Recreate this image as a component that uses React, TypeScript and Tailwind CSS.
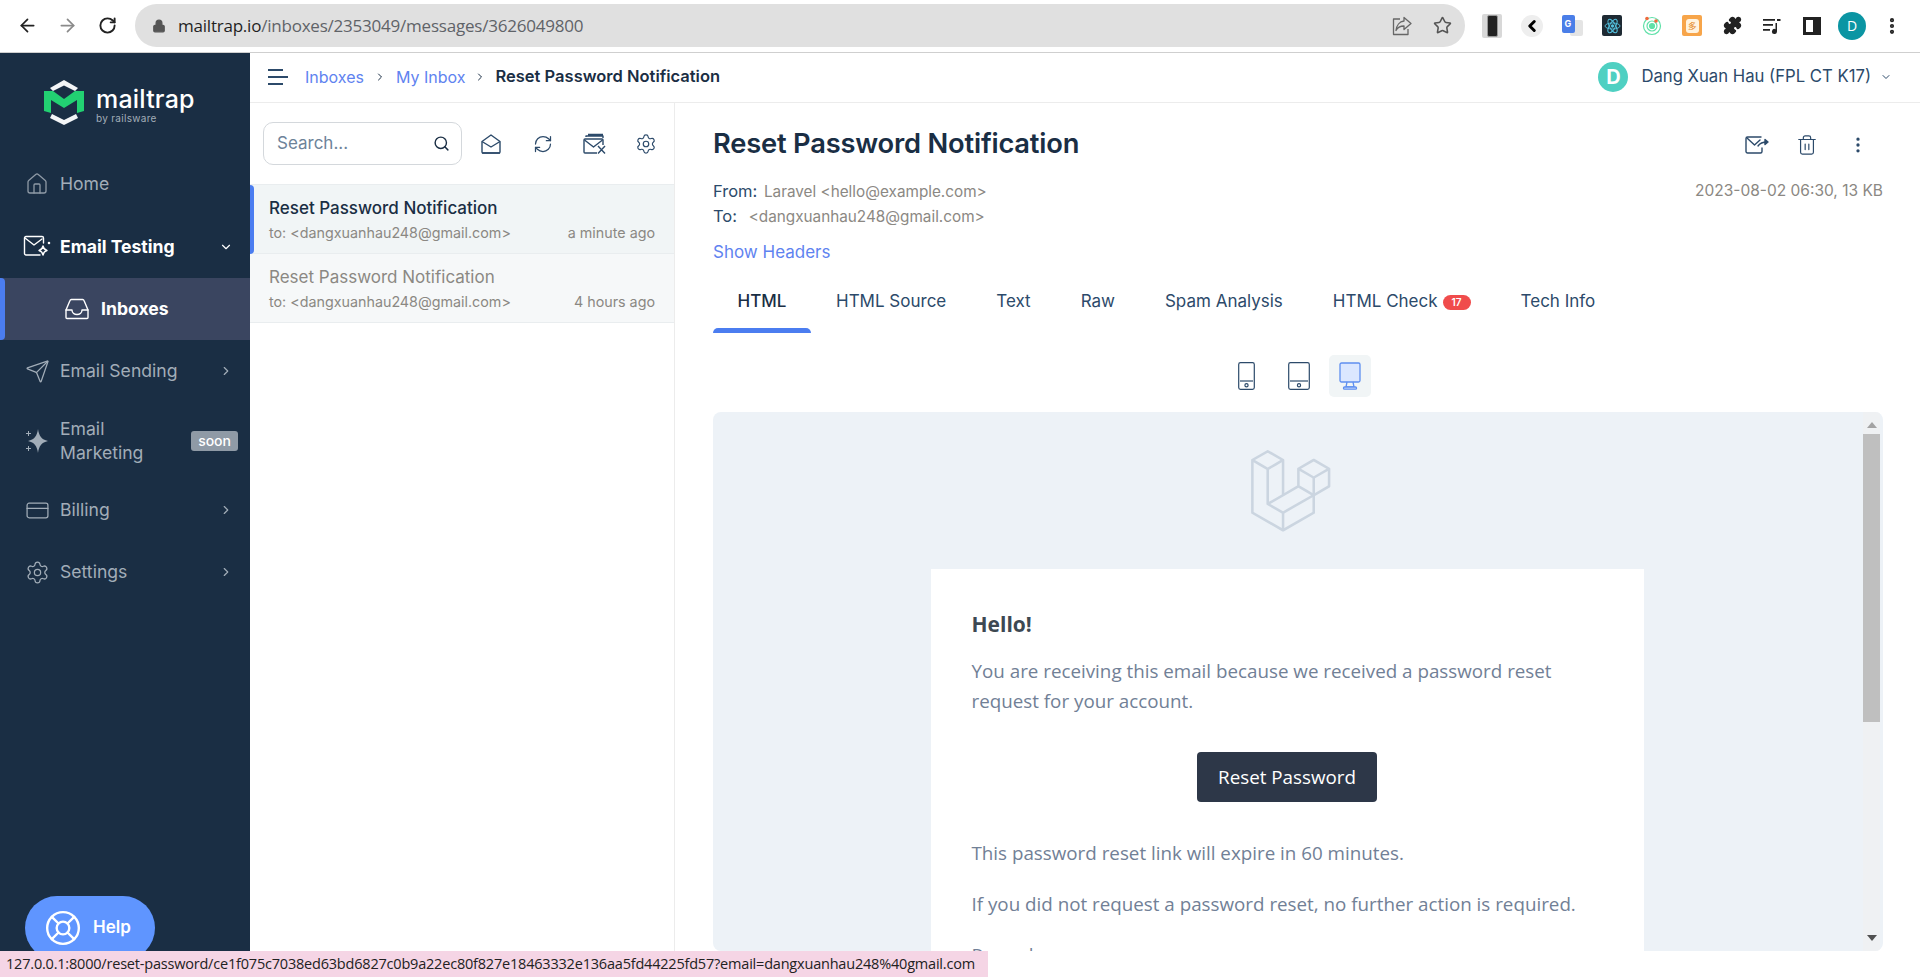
import { ChevronDown, ChevronRight, Search, RefreshCw, Settings, EllipsisVertical, Trash2, ArrowLeft, ArrowRight, RotateCw, Lock, Star, Puzzle, LifeBuoy, House, Send, CreditCard, ChevronLeft } from "lucide-react";

const ui = "font-['Inter',sans-serif]";
const chrome = "font-['Open_Sans','Noto_Sans',sans-serif]";

function Logo() {
  return (
    <svg width="40" height="46" viewBox="0 0 40 46" fill="none">
      <path d="M6 8 20 0 34 8 31 11 20 5.500 9 11Z" fill="#f3f5f7" />
      <path d="M8 34 20 40 32 34 34 38 20 45 6 38Z" fill="#f3f5f7" />
      <path d="M0 11H9L20 19 31 11H40V31L33 33V20L20 28 7 20V33L0 31Z" fill="#22d172" />
    </svg>
  );
}

function LaravelLogo() {
  return (
    <svg width="80" height="83" viewBox="0 0 50 52" fill="#cbd5e0">
      <path d="M49.626 11.564a.809.809 0 0 1 .028.209v10.972a.8.8 0 0 1-.402.694l-9.209 5.302V39.25c0 .286-.152.55-.4.694L20.42 51.01c-.044.025-.092.041-.14.058-.018.006-.035.017-.054.022a.805.805 0 0 1-.41 0c-.022-.006-.042-.018-.063-.026-.044-.016-.09-.03-.132-.054L.402 39.944A.801.801 0 0 1 0 39.25V6.334c0-.072.01-.142.028-.21.006-.023.02-.044.028-.067.015-.042.029-.085.051-.124.015-.026.037-.047.055-.071.023-.032.044-.065.071-.093.023-.023.053-.04.079-.06.029-.024.055-.05.088-.069h.001l9.61-5.533a.802.802 0 0 1 .8 0l9.61 5.533h.002c.032.02.059.045.088.068.026.02.055.038.078.06.028.029.048.062.072.094.017.024.04.045.054.071.023.04.036.082.052.124.008.023.022.044.028.068a.809.809 0 0 1 .028.209v20.559l8.008-4.611v-10.51c0-.07.01-.141.028-.208.007-.024.02-.045.028-.068.016-.042.03-.085.052-.124.015-.026.037-.047.054-.071.024-.032.044-.065.072-.093.023-.023.052-.04.078-.06.03-.024.056-.05.088-.069h.001l9.611-5.533a.801.801 0 0 1 .8 0l9.61 5.533c.034.02.06.045.09.068.025.02.054.038.077.06.028.029.048.062.072.094.018.024.04.045.054.071.023.039.036.082.052.124.009.023.022.044.028.068zm-1.574 10.718v-9.124l-3.363 1.936-4.646 2.675v9.124l8.01-4.611zm-9.61 16.505v-9.13l-4.57 2.61-13.05 7.448v9.216l17.62-10.144zM1.602 7.719v31.068L19.22 48.93v-9.214l-9.204-5.209-.003-.002-.004-.002c-.031-.018-.057-.044-.086-.066-.025-.02-.054-.036-.076-.058l-.002-.003c-.026-.025-.044-.056-.066-.084-.02-.027-.044-.05-.06-.078l-.001-.003c-.018-.03-.029-.066-.042-.1-.013-.03-.03-.058-.038-.09v-.001c-.01-.038-.012-.078-.016-.117-.004-.03-.012-.06-.012-.09v-.002-21.481L4.965 9.654 1.602 7.72zm8.81-5.994L2.405 6.334l8.005 4.609 8.006-4.61-8.006-4.608zm4.164 28.764l4.645-2.674V7.719l-3.363 1.936-4.646 2.675v20.096l3.364-1.937zM39.243 7.164l-8.006 4.609 8.006 4.609 8.005-4.61-8.005-4.608zm-.801 10.605l-4.646-2.675-3.363-1.936v9.124l4.645 2.674 3.364 1.937v-9.124zM20.02 38.33l11.743-6.704 5.87-3.35-8-4.606-9.211 5.303-8.395 4.833 7.993 4.524z" />
    </svg>
  );
}

function EmailTestingIcon() {
  return (
    <svg width="28" height="24" viewBox="0 0 28 24" fill="none" stroke="#fff" strokeWidth="1.4" strokeLinejoin="round" strokeLinecap="round">
      <path d="M17 20H3a1.500 1.500 0 0 1-1.500-1.500V3A1.500 1.500 0 0 1 3 1.500h16A1.500 1.500 0 0 1 20.500 3v5" />
      <path d="M2 3l9 7 8-6" />
      <path d="M20 11c.6 3 1.400 3.800 4 4.500-2.600.7-3.400 1.500-4 4.500-.6-3-1.400-3.800-4-4.500 2.600-.7 3.400-1.500 4-4.500Z" />
      <circle cx="26" cy="8" r=".6" />
    </svg>
  );
}

function InboxIcon() {
  return (
    <svg width="24" height="24" viewBox="0 0 24 24" fill="none" stroke="#fff" strokeWidth="1.4" strokeLinejoin="round" strokeLinecap="round">
      <path d="M1 13 5 3.500A1.500 1.500 0 0 1 6.400 2.500h11.200A1.500 1.500 0 0 1 19 3.500L23 13v7.500a1 1 0 0 1-1 1H2a1 1 0 0 1-1-1Z" />
      <path d="M1 13h6c0 6 10 6 10 0h6" />
    </svg>
  );
}

function Sparkle() {
  return (
    <svg width="24" height="26" viewBox="0 0 24 26" fill="#a2adb8">
      <path d="M13 1c1 7 3.500 10.500 10 12-6.500 1.500-9 5-10 12-1-7-3.500-10.500-10-12 6.500-1.500 9-5 10-12Z" />
      <path d="M3 3h1v2h2v1H4v2H3V6H1V5h2ZM3 18h1v2h2v1H4v2H3v-2H1v-1h2Z" />
    </svg>
  );
}

function OpenMail() {
  return (
    <svg width="20" height="20" viewBox="0 0 20 20" fill="none" stroke="#2c4a6a" strokeWidth="1.400" strokeLinejoin="round">
      <path d="M1 7.500 10 1l9 6.500V18a1 1 0 0 1-1 1H2a1 1 0 0 1-1-1Z" />
      <path d="M1 7.500 10 13l9-5.500M1 19h18" />
    </svg>
  );
}

function ClearMail() {
  return (
    <svg width="24" height="22" viewBox="0 0 24 22" fill="none" stroke="#2c4a6a" strokeWidth="1.400" strokeLinejoin="round">
      <path d="M14 20H2a1 1 0 0 1-1-1V7a1 1 0 0 1 1-1h17a1 1 0 0 1 1 1v5" />
      <path d="M1.500 7 10.500 14l9-7M3 4V3h17v2M5 1.500h15" />
      <path d="m15 13 7 7.500M22 13l-7 7.500" />
    </svg>
  );
}

function ForwardMail() {
  return (
    <svg width="24" height="18" viewBox="0 0 24 18" fill="none" stroke="#2c4a6a" strokeWidth="1.400" strokeLinejoin="round" strokeLinecap="round">
      <path d="M17 12v3.500a1.500 1.500 0 0 1-1.500 1.500h-13A1.500 1.500 0 0 1 1 15.500v-13A1.500 1.500 0 0 1 2.500 1H16" />
      <path d="m2 2 7.500 7L15 4M13 10c2-3 4-4 9-4" />
      <path d="m20 3.500 3 2.500-3 2.500Z" fill="#2c4a6a" />
    </svg>
  );
}

function ShareIcon() {
  return (
    <svg width="20" height="20" viewBox="0 0 20 20" fill="none" stroke="#666" strokeWidth="1.300" strokeLinejoin="round">
      <path d="M8 3H1.500v15.500H16V13" />
      <path d="M12 1.500 19 7.500l-7 6V10c-4 0-6.500 1.500-8 4.500C4.500 9.500 7.500 5.500 12 5Z" />
    </svg>
  );
}

function Device({ wide, active }: { wide?: boolean; active?: boolean }) {
  if (active) {
    return (
      <svg width="22" height="28" viewBox="0 0 22 28" fill="#dbe7ff" stroke="#5f8ff0" strokeWidth="1.300" strokeLinejoin="round">
        <rect x="1" y="1" width="20" height="19" rx="1.500" />
        <path d="M8 20 7 25h8l-1-5" fill="none" />
        <rect x="4.500" y="25" width="13" height="2.200" rx="1" />
      </svg>
    );
  }
  const w = wide ? 22 : 17;
  return (
    <svg width={w} height="28" viewBox={`0 0 ${w} 28`} fill="none" stroke="#2c4a6a" strokeWidth="1.200" strokeLinejoin="round">
      <rect x=".7" y=".7" width={w - 1.400} height="26.600" rx="1.800" />
      <path d={`M2 19H${w - 2}`} />
      <circle cx={w / 2} cy="23.200" r="1.600" />
    </svg>
  );
}

function NavItem({ icon, label, chevron = true }: { icon: React.ReactNode; label: string; chevron?: boolean }) {
  return (
    <div className="flex h-[62px] items-center pl-[25px] pr-[17px] text-[17.600px] text-[#a2adb8]">
      <span className="flex w-[35px] shrink-0">{icon}</span>
      <span className="flex-1">{label}</span>
      {chevron && <ChevronRight size={14} strokeWidth={2} className="text-[#a2adb8]" />}
    </div>
  );
}

function MailRow({ active, time }: { active?: boolean; time: string }) {
  return (
    <div className={`relative h-[69px] border-b border-[#e9edef] px-[19px] pt-[11px] ${active ? "bg-[#f1f5f6]" : "bg-[#f6f8f9]"}`}>
      {active && <span className="absolute -bottom-px left-0 top-0 w-[4px] rounded-r bg-[#4b7df0]" />}
      <div className={`text-[17px] leading-[24px] ${active ? "font-medium text-[#1a2e44]" : "text-[#8b8883]"}`}>Reset Password Notification</div>
      <div className="mt-[3px] flex justify-between text-[14.300px] leading-[20px] text-[#8b8883]">
        <span>{"to: <dangxuanhau248@gmail.com>"}</span>
        <span>{time}</span>
      </div>
    </div>
  );
}

function Extension({ children }: { children: React.ReactNode }) {
  return <div className="flex w-10 items-center justify-center">{children}</div>;
}

export default function App() {
  const tabs = ["HTML Source", "Text", "Raw", "Spam Analysis"];
  return (
    <div className={`relative flex h-[977px] w-[1920px] flex-col overflow-hidden bg-white ${ui}`}>
      {/* browser bar */}
      <div className="flex h-[53px] shrink-0 items-center border-b border-[#cfcfcf] pl-[7px] pr-2 pb-[1px]">
        <Extension><ArrowLeft size={21} className="text-[#222]" /></Extension>
        <Extension><ArrowRight size={21} className="text-[#8a8a8a]" /></Extension>
        <Extension><RotateCw size={19} strokeWidth={2.400} className="text-[#222]" /></Extension>
        <div className="ml-2 flex h-[43px] flex-1 items-center rounded-full bg-[#e0e0e0] pl-[17px] pr-[13px]">
          <Lock size={14} fill="#555" className="mr-[12px] text-[#555]" />
          <span className={`${chrome} flex-1 text-[17px] tracking-[-0.220px] text-[#5f6368]`}>
            <span className="text-[#1f1f1f]">mailtrap.io</span>/inboxes/2353049/messages/3626049800
          </span>
          <span className="mr-[21px] flex"><ShareIcon /></span>
          <Star size={19} strokeWidth={2} className="text-[#555]" />
        </div>
        <div className="ml-[7px] flex h-full items-center">
          <Extension>
            <span className="flex h-[24px] w-[20px] items-center justify-center rounded-[2px] bg-[#d8d8d8]">
              <span className="h-[22px] w-[11px] rounded-[2px] border border-[#999] bg-[#222]" />
            </span>
          </Extension>
          <Extension><span className="flex h-[22px] w-[22px] items-center justify-center rounded-full bg-[#eee]"><ChevronLeft size={18} strokeWidth={4} className="text-black" /></span></Extension>
          <Extension>
            <span className="relative h-[21px] w-[21px]">
              <span className="absolute bottom-0 right-0 h-[16px] w-[13px] rounded-[2px] bg-[#e4e4e4]" />
              <span className="absolute left-0 top-0 flex h-[18px] w-[13px] items-center justify-center rounded-[2px] bg-[#4a7ee8] text-[9px] font-bold text-white">G</span>
            </span>
          </Extension>
          <Extension>
            <span className="flex h-[21px] w-[20px] items-center justify-center rounded-[2px] bg-[#1e2a33]">
              <svg width="17" height="16" viewBox="0 0 17 16" fill="none" stroke="#53c1de" strokeWidth=".9">
                <ellipse cx="8.500" cy="8" rx="7.500" ry="3" />
                <ellipse cx="8.500" cy="8" rx="7.500" ry="3" transform="rotate(60 8.500 8)" />
                <ellipse cx="8.500" cy="8" rx="7.500" ry="3" transform="rotate(120 8.500 8)" />
                <circle cx="8.500" cy="8" r="1.300" fill="#53c1de" />
              </svg>
            </span>
          </Extension>
          <Extension>
            <svg width="20" height="21" viewBox="0 0 20 21" fill="none" stroke="#5fe0a8" strokeWidth="1.200">
              <circle cx="10" cy="11" r="8.500" />
              <circle cx="10" cy="11" r="5" />
              <circle cx="10" cy="11" r="2.500" fill="#5fe0a8" />
              <circle cx="5" cy="3.500" r="1.800" fill="#f0683c" stroke="none" />
              <circle cx="14" cy="6" r="1.800" fill="#f0683c" stroke="none" />
            </svg>
          </Extension>
          <Extension>
            <span className="flex h-[21px] w-[20px] items-center justify-center rounded-[2px] bg-[#f7a54a]">
              <span className="flex h-[14px] w-[13px] items-center justify-center rounded-[3px] bg-[#fff3e0] text-[9px] text-[#e58a2b]">多</span>
            </span>
          </Extension>
          <Extension><Puzzle size={19} fill="#222" className="text-[#222]" /></Extension>
          <Extension>
            <svg width="18" height="16" viewBox="0 0 18 16" fill="#222">
              <path d="M0 1h12v1.800H0ZM0 6h10v1.800H0ZM0 11h7v1.800H0Z" />
              <path d="M12.500 5H14v8.500a2.500 2.500 0 1 1-1.500-2.300ZM14 1h3.500v2H14Z" />
            </svg>
          </Extension>
          <Extension><span className="flex h-[18px] w-[18px] justify-end border-[3px] border-[#222] bg-white"><span className="h-full w-[5px] bg-[#222]" /></span></Extension>
          <Extension><span className={`${chrome} flex h-[28px] w-[28px] items-center justify-center rounded-full bg-[#0b95a3] text-[14px] text-white`}>D</span></Extension>
          <Extension><EllipsisVertical size={20} strokeWidth={3} className="text-[#222]" /></Extension>
        </div>
      </div>

      <div className="flex min-h-0 flex-1">
        {/* sidebar */}
        <aside className="relative flex w-[250px] shrink-0 flex-col bg-[#1a2e44]">
          <div className="flex h-[100px] items-center pl-[44px]">
            <Logo />
            <div className="ml-[12px] pt-[3px]">
              <div className="text-[25px] font-medium leading-[27px] tracking-[0.2px] text-white">mailtrap</div>
              <div className="text-[10px] leading-[11px] tracking-[0.3px] text-[#a2adb8]">by railsware</div>
            </div>
          </div>
          <NavItem icon={<House size={24} strokeWidth={1.300} className="text-[#8f9aa6]" />} label="Home" chevron={false} />
          <div className="mt-[1px] flex h-[62px] items-center pl-[23px] pr-[17px] text-[17.600px] font-bold text-white">
            <span className="flex w-[37px] shrink-0"><EmailTestingIcon /></span>
            <span className="flex-1">Email Testing</span>
            <ChevronDown size={14} strokeWidth={2} />
          </div>
          <div className="relative flex h-[62px] items-center bg-[#3a4560] pl-[65px] text-[17.600px] font-bold text-white">
            <span className="absolute bottom-0 left-0 top-0 w-[5px] rounded-r bg-[#4b7df0]" />
            <span className="mr-[12px] flex"><InboxIcon /></span>
            Inboxes
          </div>
          <NavItem icon={<Send size={25} strokeWidth={1.200} className="text-[#a2adb8]" />} label="Email Sending" />
          <div className="flex h-[77px] items-center pl-[25px] pr-[12px] text-[17.600px] leading-[24px] text-[#a2adb8]">
            <span className="flex w-[35px] shrink-0"><Sparkle /></span>
            <span className="flex-1">Email<br />Marketing</span>
            <span className="rounded-[3px] bg-[#8f9aa6] px-[7px] text-[14px] font-medium leading-[20px] text-white">soon</span>
          </div>
          <NavItem icon={<CreditCard size={25} strokeWidth={1.200} className="text-[#a2adb8]" />} label="Billing" />
          <NavItem icon={<Settings size={25} strokeWidth={1.200} className="text-[#a2adb8]" />} label="Settings" />
          <div className="absolute left-[25px] top-[843px] flex h-[64px] w-[130px] items-center rounded-[32px] bg-[#5f95ff] pl-[19px] text-[17px] font-semibold text-white">
            <LifeBuoy size={38} strokeWidth={1.500} className="mr-[11px]" />
            Help
          </div>
        </aside>

        <div className="flex min-w-0 flex-1 flex-col">
          {/* breadcrumb header */}
          <header className="flex h-[50px] shrink-0 items-center border-b border-[#ececec] pb-[2px] pl-[18px] pr-[28px] text-[16px]">
            <svg width="20" height="16" viewBox="0 0 20 16" fill="#2c4a6a" className="mr-[17px]">
              <path d="M0 0h15v2H0ZM0 7h20v2H0ZM0 14h15v2H0Z" />
            </svg>
            <span className="text-[#5f83f0]">Inboxes</span>
            <ChevronRight size={12} className="mx-[10px] text-[#1a2e44]" />
            <span className="text-[#5f83f0]">My Inbox</span>
            <ChevronRight size={12} className="mx-[9px] text-[#1a2e44]" />
            <span className="text-[16.500px] font-semibold text-[#1a2e44]">Reset Password Notification</span>
            <span className="ml-auto flex h-[30px] w-[30px] items-center justify-center rounded-full bg-[#4fd0c2] text-[20px] font-bold text-white">D</span>
            <span className="ml-[13px] text-[16.700px] text-[#2c4a6a]">Dang Xuan Hau (FPL CT K17)</span>
            <ChevronDown size={12} strokeWidth={2} className="ml-[9px] text-[#2c4a6a]" />
          </header>

          <div className="flex min-h-0 flex-1">
            {/* message list */}
            <section className="w-[425px] shrink-0 border-r border-[#ececec]">
              <div className="flex h-[81px] items-start pl-[13px] pt-[19px]">
                <div className="flex h-[43px] w-[199px] items-center rounded-[10px] border border-[#d4d8dc] pl-[13px] pr-[11px]">
                  <span className="flex-1 text-[17px] text-[#6d8399]">Search...</span>
                  <Search size={17} strokeWidth={2} className="text-[#1a2e44]" />
                </div>
                <div className="flex h-[43px] items-center">
                  <span className="flex w-[52px] justify-center pl-[5px]"><OpenMail /></span>
                  <span className="flex w-[52px] justify-center pl-[5px]"><RefreshCw size={20} strokeWidth={1.500} className="text-[#2c4a6a]" /></span>
                  <span className="flex w-[52px] justify-center pl-[5px]"><ClearMail /></span>
                  <span className="flex w-[52px] justify-center pl-[3px]"><Settings size={22} strokeWidth={1.300} className="text-[#2c4a6a]" /></span>
                </div>
              </div>
              <div className="border-t border-[#e9edef]">
                <MailRow active time="a minute ago" />
                <MailRow time="4 hours ago" />
              </div>
            </section>

            {/* message pane */}
            <main className="flex min-w-0 flex-1 flex-col pb-[26px] pl-[38px] pr-[37px]">
              <div className="flex h-[75px] shrink-0 items-center justify-between pt-[8px]">
                <h1 className="text-[27.300px] font-semibold tracking-[-0.2px] text-[#1a2e44]">Reset Password Notification</h1>
                <div className="flex items-center pr-[15px]">
                  <ForwardMail />
                  <Trash2 size={22} strokeWidth={1.300} className="ml-[27px] text-[#2c4a6a]" />
                  <EllipsisVertical size={20} strokeWidth={2} className="ml-[30px] text-[#2c4a6a]" />
                </div>
              </div>
              <div className="mt-[1px] flex justify-between text-[16.500px] leading-[24px] text-[#2c4a6a]">
                <div>
                  <div>From: <span className="ml-[2px] text-[15.300px] text-[#8b8883]">{"Laravel <hello@example.com>"}</span></div>
                  <div>To: <span className="ml-[7px] text-[15.300px] text-[#8b8883]">{"<dangxuanhau248@gmail.com>"}</span></div>
                </div>
                <div className="text-[15.500px] text-[#8b8883]">2023-08-02 06:30, 13 KB</div>
              </div>
              <div className="mt-[11px] text-[17px] leading-[24px] text-[#5f83f0]">Show Headers</div>

              <div className="mt-[13px] flex h-[62px] shrink-0 text-[17px] text-[#2c4a6a]">
                <div className="relative flex h-[50px] w-[98px] items-center justify-center font-medium text-[#1a2e44]">
                  HTML
                  <span className="absolute -bottom-[6px] left-0 right-0 h-[5px] rounded-t-[5px] bg-[#4b7df0]" />
                </div>
                {tabs.map((t) => (
                  <div key={t} className="flex h-[50px] items-center px-[25px]">{t}</div>
                ))}
                <div className="flex h-[50px] items-center px-[25px]">
                  HTML Check
                  <span className="ml-[5px] rounded-full bg-[#f04c4c] px-[9px] text-[10px] font-semibold leading-[15px] text-white">17</span>
                </div>
                <div className="flex h-[50px] items-center px-[25px]">Tech Info</div>
              </div>

              <div className="mt-[16px] flex h-[42px] shrink-0 items-center justify-center">
                <span className="flex w-[42px] justify-center"><Device /></span>
                <span className="ml-[10px] flex w-[42px] justify-center"><Device wide /></span>
                <span className="ml-[9px] flex h-[42px] w-[42px] items-center justify-center rounded-[5px] bg-[#f1f5f6]"><Device active /></span>
              </div>

              <div className="mt-[15px] flex min-h-0 flex-1 overflow-hidden rounded-lg bg-[#edf2f7]">
                <div className={`flex min-w-0 flex-1 flex-col items-center overflow-hidden pr-[2px] ${chrome}`}>
                  <div className="flex h-[157px] w-full shrink-0 items-start justify-center pl-[8px] pt-[38px]">
                    <LaravelLogo />
                  </div>
                  <div className="w-[713px] flex-1 bg-white px-[41px] pt-[40px] text-[18.800px] leading-[30px] text-[#718096]">
                    <h2 className="text-[21px] font-bold leading-[30px] text-[#3d4852]">Hello!</h2>
                    <p className="mt-[17px]">You are receiving this email because we received a password reset request for your account.</p>
                    <div className="mt-[36px] flex justify-center">
                      <span className="flex h-[50px] w-[180px] items-center justify-center rounded-[4px] bg-[#2d3748] text-white">Reset Password</span>
                    </div>
                    <p className="mt-[36px]">This password reset link will expire in 60 minutes.</p>
                    <p className="mt-[21px]">If you did not request a password reset, no further action is required.</p>
                    <p className="mt-[21px]">Regards,</p>
                  </div>
                </div>
                <div className="mr-[3px] flex w-[17px] shrink-0 flex-col items-center bg-[#eff1f3] pt-[10px]">
                  <span className="h-0 w-0 border-x-[5px] border-b-[6px] border-x-transparent border-b-[#a3a3a3]" />
                  <span className="mt-[6px] h-[288px] w-full bg-[#bfbfbf]" />
                  <span className="mt-auto mb-[10px] h-0 w-0 border-x-[5px] border-t-[6px] border-x-transparent border-t-[#505050]" />
                </div>
              </div>
            </main>
          </div>
        </div>
      </div>

      {/* status bubble */}
      <div className={`${chrome} absolute bottom-0 left-0 flex h-[26px] w-[988px] items-center whitespace-nowrap bg-[#f5d5e5] pl-[6px] text-[14.500px] tracking-[-0.2px] text-[#222]`}>
        127.0.0.1:8000/reset-password/ce1f075c7038ed63bd6827c0b9a22ec80f827e18463332e136aa5fd44225fd57?email=dangxuanhau248%40gmail.com
      </div>
    </div>
  );
}
